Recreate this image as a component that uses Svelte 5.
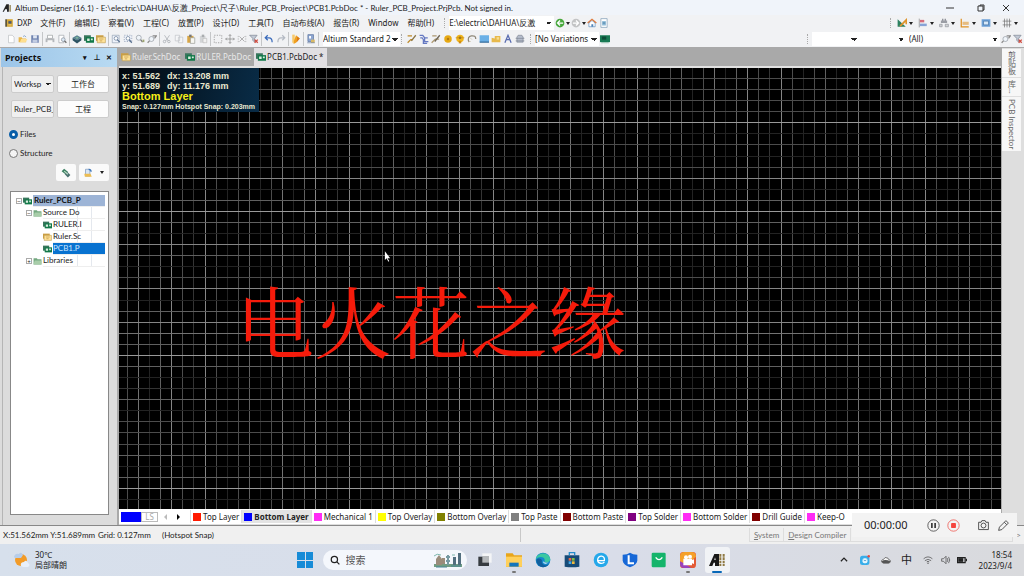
<script lang="ts">
    interface Layer {
        name: string;
        color: string;
    }

    const menus = ['文件(F)', '编辑(E)', '察看(V)', '工程(C)', '放置(P)', '设计(D)', '工具(T)', '自动布线(A)', '报告(R)', 'Window', '帮助(H)'];

    const toolGroups = [
        ['new', 'open', 'save'],
        ['print', 'preview'],
        ['stack', 'pcb', 'sheet'],
        ['zoomDoc', 'zoomArea', 'zoomSel', 'zoomClear'],
        ['cut', 'copy', 'paste', 'stamp'],
        ['select', 'move', 'deselect', 'filter'],
        ['undo', 'redo'],
        ['pencil'],
        ['browse']
    ];
    const placeTools = ['route', 'diff', 'multi', 'pad', 'via', 'arc', 'fill', 'polygon', 'string', 'component'];
    const utilityTools = ['measure', 'align', 'find', 'dimension', 'room', 'grid'];

    const layers: Layer[] = [
        {name: 'Top Layer', color: '#ff1a00'},
        {name: 'Bottom Layer', color: '#0000ff'},
        {name: 'Mechanical 1', color: '#ff2bf5'},
        {name: 'Top Overlay', color: '#ffff00'},
        {name: 'Bottom Overlay', color: '#808000'},
        {name: 'Top Paste', color: '#808080'},
        {name: 'Bottom Paste', color: '#800000'},
        {name: 'Top Solder', color: '#800080'},
        {name: 'Bottom Solder', color: '#ff2bf5'},
        {name: 'Drill Guide', color: '#800000'},
        {name: 'Keep-O', color: '#ff2bf5'}
    ];
    const taskApps = ['tasks', 'folder', 'edge', 'store', 'eapp', 'lenovo', 'mall', 'recorder', 'altium'];
    const trayIcons = ['chevron', 'chat', 'cloud', 'ime', 'wifi', 'sound', 'battery'];

    // grid lines do not all get the same brightness at this zoom level
    const columnTones = [4, 6, 2, 5, 7, 4, 3, 7, 4, 2, 4, 5, 2];
    const rowTones = [4, 4, 4, 4, 8, 2, 4, 2, 4, 7, 2, 5, 8, 5, 2, 7, 5, 2, 4, 7, 2, 5, 7, 6, 5, 8, 5, 2, 3, 5, 2, 4, 4, 4, 5, 2, 5, 8, 2];
    const pitch = 144 / 13;
    const columns = Array.from({length: 180}, (_, i) => ({at: Math.round(8 + i * pitch), tone: columnTones[i % 13]}));
    const rows = Array.from({length: 100}, (_, i) => ({at: Math.round(10 + i * pitch), tone: rowTones[i % rowTones.length]}));

    let view = $state('files');
    let activeLayer = $state('Bottom Layer');
    let query = $state('');

    const icons: Record<string, string> = {
        new: '<path d="M4 2h6l3 3v9H4z" fill="#fff" stroke="#b5b8bd"/>',
        open: '<path d="M1 13V5h5l1 2h6v6z" fill="#e8b64c"/><path d="M3 13l2-5h10l-3 5z" fill="#ffdf8e"/><path d="M8 4q3-3 5 1" stroke="#5b84b8" fill="none"/>',
        save: '<path d="M2 2h12v12H2z" fill="#6f83b0"/><path d="M5 2h6v5H5z" fill="#dfe6f2"/><path d="M4 9h8v5H4z" fill="#c3cde2"/>',
        print: '<path d="M4 2h8v5H4z" fill="#fff" stroke="#8f9396"/><path d="M1 7h14v6H1z" fill="#b4b7bb"/><path d="M4 10h8v4H4z" fill="#f8f8f8"/>',
        preview: '<path d="M3 2h8v12H3z" fill="#fff" stroke="#979ca3"/><circle cx="10" cy="9" r="3" fill="#dce8f4" stroke="#7b8490"/><path d="M12 11l3 3" stroke="#666" stroke-width="2"/>',
        stack: '<path d="M1 6l7-4 7 4-7 4z" fill="#558091"/><path d="M1 6l7 4 7-4v4l-7 5-7-5z" fill="#2c5363"/><path d="M5 6l3-2 3 2-3 2z" fill="#81b39c"/>',
        pcb: '<path d="M0 2h11v9H0z" fill="#39765d"/><path d="M3 5h13v9H3z" fill="#117848"/><path d="M5 7h4v4H5zM11 7h3v3h-3z" fill="#d9eddf"/>',
        sheet: '<path d="M0 2h12v9H0z" fill="#cc9f44"/><path d="M2 5h13v9H2z" fill="#ffe399" stroke="#bd9b50"/><path d="M5 8h7M6 11h4" stroke="#b68635"/>',
        zoomDoc: '<path d="M2 2h11v12H2z" fill="#eef2fa" stroke="#8c9aae"/><circle cx="8" cy="7" r="3" fill="#fff" stroke="#566e8d"/><path d="M10 9l4 4" stroke="#566e8d" stroke-width="2"/>',
        zoomArea: '<path d="M2 2h12v10H2z" fill="#eef2fa" stroke="#7889a3" stroke-dasharray="2"/><circle cx="8" cy="7" r="3" fill="#fff" stroke="#566e8d"/><path d="M10 9l4 5" stroke="#566e8d" stroke-width="2"/>',
        zoomSel: '<circle cx="6" cy="6" r="4" fill="#eff4f9" stroke="#888f99"/><path d="M9 9l3 4" stroke="#777" stroke-width="2"/><path d="M12 9h3v4h-3z" fill="#9ea672"/>',
        zoomClear: '<circle cx="7" cy="8" r="4" fill="#eff4f9" stroke="#888f99"/><path d="M4 11l-3 3M9 3h6l-3 4" stroke="#888" fill="none" stroke-width="2"/>',
        cut: '<path d="M4 2l6 9M12 2L6 11" stroke="#999da3" fill="none"/><circle cx="4" cy="12" r="2" fill="none" stroke="#999da3"/><circle cx="11" cy="12" r="2" fill="none" stroke="#999da3"/>',
        copy: '<path d="M2 2h7v9H2zM7 5h7v9H7z" fill="#f5f6f7" stroke="#babdc2"/>',
        paste: '<path d="M2 3h10v11H2z" fill="#d7a647"/><path d="M5 1h4v4H5z" fill="#777"/><path d="M7 6h7v9H7z" fill="#f7f7f2" stroke="#8f928b"/>',
        stamp: '<path d="M3 3h9v11H3z" fill="#d3d5d7"/><path d="M6 1h4v4H6z" fill="#a9acaf"/><path d="M8 7h6v7H8z" fill="#f1f1f1" stroke="#b8b8b8"/>',
        select: '<path d="M2 2h12v12H2z" fill="none" stroke="#777" stroke-dasharray="2"/>',
        move: '<path d="M8 1v14M1 8h14M6 3l2-2 2 2M6 13l2 2 2-2M3 6L1 8l2 2M13 6l2 2-2 2" fill="none" stroke="#777"/>',
        deselect: '<path d="M4 4l8 8M12 4l-8 8" stroke="#888"/><path d="M2 3v10M14 3v10" stroke="#999" stroke-dasharray="2"/>',
        filter: '<path d="M1 2h12l-4 5v6l-3-3V7z" fill="#c3cad6" stroke="#737c8b"/><path d="M9 9l5 5M14 9l-5 5" stroke="#cf4b3e" stroke-width="2"/>',
        undo: '<path d="M6 2L2 6l4 4M2 6h6q5 0 5 7" fill="none" stroke="#3a6bbb" stroke-width="2"/>',
        redo: '<path d="M10 2l4 4-4 4M14 6H8q-5 0-5 7" fill="none" stroke="#b5bbc4" stroke-width="2"/>',
        pencil: '<path d="M2 1h4v13H2z" fill="#f7c96a"/><path d="M8 2l6 5-6 7-4 2 1-6z" fill="#f0a01f"/><path d="M10 4l4 3-5 6z" fill="#d9781a"/>',
        browse: '<path d="M3 1h9v11H3z" fill="#8ea6d1" stroke="#526b99"/><path d="M5 3h3v4H5z" fill="#fff"/><path d="M8 9h6v5H8z" fill="#d7b866"/><path d="M2 14h12" stroke="#526b99"/>',
        route: '<path d="M1 3h7M1 14l5-5h3" stroke="#be8a2a" fill="none" stroke-width="2"/><path d="M14 2L7 11" stroke="#8b7440" stroke-width="2"/>',
        diff: '<path d="M1 2h5l3 4v6h6M2 6h3l2 3v6h6M9 6h5" stroke="#6478c1" fill="none" stroke-width="2"/>',
        multi: '<path d="M2 3h7M1 14l6-6h6" stroke="#ad9870" fill="none" stroke-width="2"/><path d="M14 2L6 12" stroke="#6e6453" stroke-width="2"/>',
        pad: '<circle cx="8" cy="8" r="6" fill="#e6a914"/><circle cx="8" cy="8" r="2" fill="#b57910"/>',
        via: '<circle cx="8" cy="7" r="6" fill="#efb41c"/><circle cx="8" cy="6" r="2" fill="#8e6c20"/><path d="M6 11h4v4H6z" fill="#d28e12"/><path d="M1 6h14" stroke="#bc8416"/>',
        arc: '<path d="M3 13Q0 4 7 3t7 5" stroke="#8e8778" fill="none" stroke-width="2"/><path d="M2 12h4M5 6l3 3" stroke="#c2b799"/>',
        fill: '<path d="M1 2h15v11H1z" fill="#69afe6"/><path d="M1 12h15v2H1z" fill="#376d9d"/>',
        polygon: '<path d="M1 6l5 1V3h9v10H1z" fill="#e7b94c"/><path d="M9 5h4v4H9z" fill="#f7dd90"/>',
        string: '<path d="M3 14L8 2l5 12M5 9h6" fill="none" stroke="#596cb0" stroke-width="2"/>',
        component: '<path d="M3 5l2-3h6l2 3v8H3z" fill="#b5bccb" stroke="#7a818e"/><path d="M1 7h14M1 11h14" stroke="#7a818e"/>',
        board: '<path d="M0 2h16v11H0z" fill="#197a54"/><path d="M3 4h7v5H3z" fill="#0d4d38"/><path d="M2 14h12" stroke="#69a88d"/>',
        dxp: '<path d="M2 2h3v12H2z" fill="#5e563a"/><path d="M5 2h9v12H5z" fill="#d3a32c"/><path d="M7 5h5v4H7z" fill="#465676"/><path d="M7 11h5" stroke="#fff2bd"/>',
        altiumSmall: '<path d="M1 14L7 2h4v12H8v-4H5l-2 4z" fill="#232323"/><path d="M13 3v11" stroke="#8a7842" stroke-width="2"/>',
        back: '<circle cx="8" cy="8" r="7" fill="#48a83d"/><path d="M13 8H4M8 4L4 8l4 4" stroke="#fff" fill="none" stroke-width="2"/>',
        forward: '<circle cx="8" cy="8" r="7" fill="#c3c4c5"/><path d="M3 8h9M8 4l4 4-4 4" stroke="#fff" fill="none" stroke-width="2"/>',
        home: '<path d="M3 8v6h10V8L8 4z" fill="#fff" stroke="#4d82b7"/><path d="M1 8l7-6 7 6" fill="none" stroke="#df783b" stroke-width="2"/><path d="M7 10h3v4H7z" fill="#4d82b7"/>',
        favorite: '<path d="M3 1h10v14H3z" fill="#fff" stroke="#6e91ad"/><path d="M5 5h6v7H5z" fill="#8bb8d5"/><path d="M6 8h4" stroke="#235f8b"/>',
        measure: '<path d="M1 2v12h13z" fill="#2c8161"/><path d="M5 13L15 3v7" fill="none" stroke="#de942c" stroke-width="3"/>',
        align: '<path d="M2 1v14" stroke="#777"/><path d="M3 3h7v4H3z" fill="#d56c7b"/><path d="M3 9h11v4H3z" fill="#87a3d6"/>',
        find: '<path d="M5 1h2v6H5zM9 1h2v6H9z" fill="#848790"/><path d="M3 4h10v4H3z" fill="#9a9da4"/><path d="M1 10h4v4H1zM10 10h5v4h-5z" fill="#d1d3d6" stroke="#8c8f96"/>',
        dimension: '<path d="M2 1v13h12" fill="none" stroke="#df9125" stroke-width="2"/><path d="M4 6h10v5H4z" fill="#e6bc81"/>',
        room: '<path d="M1 2h14v12H1z" fill="#6ca1d8"/><path d="M4 5h8v6H4z" fill="#d7e8f8" stroke="#3c6c9d"/>',
        grid: '<path d="M4 1v14M8 1v14M12 1v14M1 5h14M1 11h14" stroke="#666"/>',
        workspace: '<path d="M1 5l4-4 6 5-4 4z" fill="#3c8062"/><path d="M6 10l4-4 5 5-4 4z" fill="#4a716f"/><path d="M5 5l6 5" stroke="#bad9c4" stroke-width="2"/>',
        addDoc: '<path d="M4 2h7v11H4z" fill="#d9e6f5" stroke="#6e8db6"/><path d="M2 9h10l2 5H3z" fill="#edbd52"/><path d="M9 2q4 0 4 4" stroke="#3973b8" fill="none" stroke-width="2"/>',
        treeFolder: '<path d="M1 3h6l1 2h7v9H1z" fill="#74a880"/><path d="M3 7h12v7H1z" fill="#a8cda9"/>',
        tasks: '<path d="M8 2h14v14H8z" fill="#f4f5f7"/><path d="M2 7h16v14H2z" fill="#363b40"/><path d="M8 7h10v9H8z" fill="#b5b8bb"/>',
        folder: '<path d="M0 2h10l2 3h12v17H0z" fill="#e8a51b"/><path d="M0 7h24v15H0z" fill="#ffd05b"/><path d="M5 16h14v6H5z" fill="#1475bc"/>',
        edge: '<circle cx="12" cy="12" r="11" fill="#1388cc"/><path d="M1 11C3 0 21-1 23 11c0 5-8 6-9 3 3-5-6-10-13-3" fill="#3bc7a1"/><path d="M2 12c5-5 10 0 8 3 1 5 7 6 11 3-7 9-19 4-19-6" fill="#12609d"/><path d="M12 14q4 4 9 1-4 4-8 2z" fill="#e9f8fb"/>',
        store: '<path d="M1 5h22v17q-11 2-22 0z" fill="#174b78"/><path d="M8 5V1h8v4" fill="none" stroke="#248dcc" stroke-width="2"/><path d="M7 9h4v4H7z" fill="#ed6846"/><path d="M12 9h4v4h-4z" fill="#83bd48"/><path d="M7 14h4v4H7z" fill="#43a9e6"/><path d="M12 14h4v4h-4z" fill="#f2bb3c"/>',
        eapp: '<circle cx="12" cy="12" r="11" fill="#25a8ea"/><path d="M6 13h11c2-9-10-9-10-1 0 6 8 6 10 3" fill="none" stroke="#fff" stroke-width="2"/>',
        lenovo: '<path d="M1 4q7 0 11-3 4 3 11 3v9q-1 6-11 10Q2 19 1 13z" fill="#1768d7"/><path d="M10 5v12h8" fill="none" stroke="#fff" stroke-width="3"/>',
        mall: '<rect x="1" y="1" width="21" height="22" rx="2" fill="#15b46b"/><path d="M7 8q5 7 10 0" fill="none" stroke="#fff" stroke-width="2"/>',
        recorder: '<rect x="0" y="0" width="24" height="24" rx="5" fill="#e35a35"/><path d="M0 7q0-7 7-7h10q7 0 7 7L5 23q-5-1-5-6z" fill="#f5a12a"/><path d="M0 14v4q0 6 7 6h10l-9-6z" fill="#9a42bd"/><circle cx="9" cy="8" r="3" fill="#fff"/><circle cx="15" cy="7" r="3" fill="#fff"/><path d="M5 10h13v2l3-1v7l-3-1v3H5z" fill="#fff"/>',
        altium: '<path d="M0 21L8 3h7v18h-6v-5H7l-2 5z" fill="#171717"/><path d="M9 8l-1 4h2z" fill="#fff"/><path d="M17 3v18M22 3v18" stroke="#8f7942" stroke-width="3" stroke-dasharray="4 1"/>',
        chevron: '<path d="M3 10l5-5 5 5" fill="none" stroke="#222" stroke-width="2"/>',
        chat: '<rect x="0" y="1" width="15" height="15" rx="4" fill="#38aeea"/><rect x="4" y="5" width="8" height="8" rx="3" fill="#e6f6fd"/><path d="M6 8q2 3 4 0" fill="none" stroke="#1876b7"/><circle cx="14" cy="2" r="2" fill="#e54b42"/>',
        cloud: '<path d="M4 13q-4-1-3-4 1-2 3-2 2-5 7-2l1 2q4 1 3 4-1 2-3 2z" fill="#f5f5f5" stroke="#333"/><path d="M1 10q5-4 14 0-1 3-3 3H4q-3-1-3-3z" fill="#555"/>',
        wifi: '<path d="M1 6q7-6 14 0M3 9q5-4 10 0M6 11q2-2 4 0" fill="none" stroke="#333"/><circle cx="8" cy="13" r="1" fill="#333"/>',
        sound: '<path d="M1 6h3l4-4v12l-4-4H1z" fill="none" stroke="#333"/><path d="M10 5q2 3 0 6M12 3q4 5 0 10" fill="none" stroke="#333"/>',
        battery: '<path d="M1 4h12v8H1z" fill="none" stroke="#222" stroke-width="2"/><path d="M2 5h8v6H2z" fill="#222"/><path d="M14 6h2v4h-2z" fill="#222"/>',
        pause: '<circle cx="8" cy="8" r="7" fill="none" stroke="#444"/><path d="M6 5v6M10 5v6" stroke="#333" stroke-width="2"/>',
        stop: '<circle cx="8" cy="8" r="7" fill="none" stroke="#ee5c55"/><rect x="5" y="5" width="6" height="6" rx="1" fill="#f5443d"/>',
        camera: '<path d="M2 4h3l1-2h4l1 2h3v9H2z" fill="none" stroke="#333"/><circle cx="8" cy="8" r="3" fill="none" stroke="#333"/>',
        pen: '<path d="M2 14l1-4 8-8 3 3-8 8zM9 4l3 3" fill="none" stroke="#333"/>',
        magnifier: '<circle cx="7" cy="7" r="5" fill="none" stroke="#222" stroke-width="2"/><path d="M11 11l4 4" stroke="#222" stroke-width="2"/>'
    };
</script>

{#snippet icon(name: string, box = 16)}
    <svg class="icon" viewBox="0 0 {box} {box}" aria-hidden="true">{@html icons[name]}</svg>
{/snippet}

<div class="desktop">
    <header class="titlebar">
        {@render icon('altiumSmall')}
        <span class="title">Altium Designer (16.1) - E:\electric\DAHUA\反激_Project\尺子\Ruler_PCB_Project\PCB1.PcbDoc * - Ruler_PCB_Project.PrjPcb. Not signed in.</span>
        <button aria-label="Minimize"><svg viewBox="0 0 8 8"><path d="M0 4h8" /></svg></button>
        <button aria-label="Restore"><svg viewBox="0 0 8 8"><path d="M1 2h5v5H1zM3 2V1h4v5H6" /></svg></button>
        <button aria-label="Close"><svg viewBox="0 0 8 8"><path d="M1 1l6 6M7 1L1 7" /></svg></button>
    </header>

    <nav class="menubar">
        <button class="dxp">{@render icon('dxp')}DXP</button>
        {#each menus as menu}
            <button>{menu}</button>
        {/each}
        <span class="grip"></span>
        <select class="path" aria-label="Path"><option>E:\electric\DAHUA\反激</option></select>
        <button class="tool" aria-label="Back">{@render icon('back')}</button>
        <i class="drop"></i>
        <button class="tool" aria-label="Forward">{@render icon('forward')}</button>
        <i class="drop"></i>
        <button class="tool" aria-label="Home">{@render icon('home')}</button>
        <button class="tool" aria-label="Favorites">{@render icon('favorite')}</button>
        <div class="utility">
            <span class="grip"></span>
            {#each utilityTools as tool}
                <button class="tool dropdown" aria-label={tool}>{@render icon(tool)}<i class="drop"></i></button>
            {/each}
        </div>
    </nav>

    <div class="toolbar">
        {#each toolGroups as group}
            <div class="group">
                {#each group as tool}
                    <button class="tool" aria-label={tool}>{@render icon(tool)}</button>
                {/each}
            </div>
        {/each}
        <select class="standard" aria-label="View configuration"><option>Altium Standard 2</option></select>
        <span class="grip"></span>
        {#each placeTools as tool}
            <button class="tool" aria-label={tool}>{@render icon(tool)}</button>
        {/each}
        <span class="grip variant-grip"></span>
        <select class="variations" aria-label="Variations"><option>[No Variations</option></select>
        <button class="tool" aria-label="board">{@render icon('board')}</button>
        <div class="filterbar">
            <span class="grip"></span>
            <select class="net" aria-label="Net"><option></option></select>
            <select class="net" aria-label="Component"><option></option></select>
            <select class="all" aria-label="Filter"><option>(All)</option></select>
            <button class="tool" aria-label="Zoom filter">{@render icon('zoomClear')}</button>
            <button class="tool" aria-label="Clear filter">{@render icon('filter')}</button>
        </div>
    </div>

    <main>
        <aside class="projects">
            <h2>Projects<span>▾</span><span>⊥</span><span>✕</span></h2>
            <div class="panel">
                <div class="fields">
                    <select aria-label="Workspace"><option>Worksp</option></select>
                    <button>工作台</button>
                    <input value="Ruler_PCB_I" aria-label="Project" />
                    <button>工程</button>
                </div>
                <label><input type="radio" bind:group={view} value="files" />Files</label>
                <label><input type="radio" bind:group={view} value="structure" />Structure</label>
                <div class="actions">
                    <button aria-label="Workspace view">{@render icon('workspace')}</button>
                    <button class="wide" aria-label="Add document">{@render icon('addDoc')}<i class="drop"></i></button>
                </div>
                <ul class="tree">
                    <li class="root"><i class="twist">−</i>{@render icon('pcb')}<span>Ruler_PCB_P</span></li>
                    <li class="branch"><i class="twist">−</i>{@render icon('treeFolder')}<span>Source Do</span></li>
                    <li class="leaf">{@render icon('pcb')}<span>RULER.I</span></li>
                    <li class="leaf">{@render icon('sheet')}<span>Ruler.Sc</span></li>
                    <li class="leaf current">{@render icon('pcb')}<span>PCB1.P</span></li>
                    <li class="branch"><i class="twist">+</i>{@render icon('treeFolder')}<span>Libraries</span></li>
                </ul>
            </div>
        </aside>

        <section class="editor">
            <div class="doctabs">
                <button>{@render icon('sheet')}Ruler.SchDoc</button>
                <button>{@render icon('pcb')}RULER.PcbDoc</button>
                <button class="active">{@render icon('pcb')}PCB1.PcbDoc *</button>
            </div>
            <div class="board">
                <svg class="gridlines">
                    {#each columns as line}
                        <rect class="tone{line.tone}" x={line.at} y="0" width="1" height="100%" />
                    {/each}
                    {#each rows as line}
                        <rect class="tone{line.tone}" x="0" y={line.at} width="100%" height="1" />
                    {/each}
                </svg>
                <div class="headsup">
                    <div class="coords"><span>x: 51.562</span><span>dx: 13.208 mm</span></div>
                    <div class="coords"><span>y: 51.689</span><span>dy: 11.176 mm</span></div>
                    <strong>Bottom Layer</strong>
                    <small>Snap: 0.127mm Hotspot Snap: 0.203mm</small>
                </div>
                <div class="silk">电火花之缘</div>
                <svg class="pointer" viewBox="0 0 8 12"><path d="M1 0v10l2-2 2 4 1-1-2-3h3z" fill="#fff" /></svg>
            </div>
            <div class="layerbar">
                <span class="layer-color"></span>
                <button class="ls">LS</button>
                <button class="arrow off" aria-label="Previous layers"><svg viewBox="0 0 4 6"><path d="M4 0v6L1 3z" /></svg></button>
                <button class="arrow" aria-label="Next layers"><svg viewBox="0 0 4 6"><path d="M0 0v6l3-3z" /></svg></button>
                {#each layers as layer}
                    <button class="layer" class:active={layer.name === activeLayer} onclick={() => activeLayer = layer.name}>
                        <i style="background: {layer.color}"></i>{layer.name}
                    </button>
                {/each}
            </div>
        </section>

        <aside class="sidetabs">
            <div>
                <button>剪贴板</button>
                <button>库...</button>
                <button>PCB Inspector</button>
            </div>
        </aside>
    </main>

    <footer class="statusbar">
        <span class="position">X:51.562mm Y:51.689mm</span>
        <span class="snap">Grid: 0.127mm</span>
        <span class="hotspot">(Hotspot Snap)</span>
        <div class="panels">
            <button><u>S</u>ystem</button>
            <button><u>D</u>esign Compiler</button>
            <span></span>
            <button class="more">&gt;</button>
        </div>
    </footer>

    <div class="recorder">
        <time>00:00:00</time>
        <button aria-label="Pause">{@render icon('pause')}</button>
        <button aria-label="Stop">{@render icon('stop')}</button>
        <button class="camera" aria-label="Screenshot">{@render icon('camera')}</button>
        <button aria-label="Draw">{@render icon('pen')}</button>
    </div>

    <div class="taskbar">
        <button class="weather">
            <svg viewBox="0 0 16 16"><circle cx="7" cy="8" r="6" fill="#f29b28" /><path d="M0 5q1-4 5-3 2-3 4 1l-2 3H1z" fill="#b7cde9" /><path d="M7 14q-1-4 3-4 2-3 4 1 3 2 0 4H9z" fill="#e8f0fb" /></svg>
            <span>30℃<br />局部晴朗</span>
        </button>
        <div class="apps">
            <button class="start" aria-label="Start"><svg viewBox="0 0 16 16"><path d="M0 0h8v8H0zM9 0h7v8H9zM0 9h8v7H0zM9 9h7v7H9z" fill="#168bd7" /></svg></button>
            <label class="search">
                {@render icon('magnifier')}
                <input placeholder="搜索" bind:value={query} aria-label="搜索" />
                <svg class="skyline" viewBox="0 0 30 16"><path d="M1 12h28v3H1z" fill="#729d82" /><path d="M3 13V7l3-4 3 4v6zM9 12V6h3v6z" fill="#9a8c7b" /><path d="M15 13V3M13 5h4M13 9h4" stroke="#769aa3" stroke-width="2" /><path d="M20 13V5h3v8zM25 13V1h3v12z" fill="#526f7f" /><path d="M1 4q3-3 7-1M19 3h3" stroke="#7eb8ae" fill="none" /><path d="M3 15h11M18 14h10" stroke="#458496" /></svg>
            </label>
            {#each taskApps as app}
                <button class="app" class:current={app === 'altium'} class:running={app === 'folder' || app === 'recorder'} aria-label={app}>{@render icon(app, 24)}</button>
            {/each}
        </div>
        <div class="tray">
            {#each trayIcons as item}
                <button class={item} aria-label={item}>
                    {#if item === 'ime'}中{:else}{@render icon(item)}{/if}
                </button>
            {/each}
            <div class="clock">18:54<br />2023/9/4</div>
        </div>
    </div>
</div>

<style>
    :global(body) {
        margin: 0;
        overflow: hidden;
    }

    .desktop {
        position: relative;
        display: flex;
        flex-direction: column;
        height: 100vh;
        background: #f1f2f4;
        color: #222;
        font: 8px/12px "Noto Sans", "Noto Sans CJK SC", sans-serif;
        white-space: nowrap;
    }

    .titlebar, .panel, .statusbar, .sidetabs {
        font-family: Lato, "Noto Sans CJK SC", sans-serif;
    }

    button, select, input {
        margin: 0;
        padding: 0;
        border: 0;
        background: none;
        color: inherit;
        font: inherit;
        box-sizing: border-box;
        min-width: 0;
    }

    button {
        display: flex;
        align-items: center;
        justify-content: center;
        flex: none;
    }

    select {
        appearance: none;
        background:
            linear-gradient(45deg, transparent 50%, #222 50%) no-repeat right 5px center / 3px 3px,
            linear-gradient(-45deg, transparent 50%, #222 50%) no-repeat right 2px center / 3px 3px,
            #fff;
        padding-right: 9px;
        height: 14px;
        overflow: hidden;
    }

    svg {
        display: block;
        flex: none;
    }

    .icon {
        width: 10px;
        height: 10px;
    }

    .titlebar {
        display: flex;
        align-items: center;
        height: 15px;
        padding: 0 8px 0 2px;
        background: #f0f4fa;
    }

    .title {
        flex: 1;
        margin-left: 3px;
    }

    .titlebar button {
        width: 31px;
    }

    .titlebar button:last-child {
        width: 20px;
    }

    .titlebar button svg {
        width: 8px;
        height: 8px;
        fill: none;
        stroke: #333;
    }

    .menubar, .toolbar {
        display: flex;
        align-items: center;
        height: 16px;
        padding-left: 4px;
    }

    .menubar > button {
        margin-right: 9px;
    }

    .menubar .dxp {
        gap: 3px;
        margin-right: 8px;
    }

    .tool, .menubar > .tool {
        width: 12px;
        height: 14px;
        margin: 0;
    }

    .grip {
        width: 1px;
        height: 10px;
        margin: 0 3px 0 1px;
        border-left: 1px dotted #aaa;
    }

    .drop {
        flex: none;
        width: 0;
        margin: 0 1px;
        border: 2px solid transparent;
        border-top: 3px solid #222;
        border-bottom: 0;
    }

    .menubar > .drop {
        margin: 0;
    }

    .path {
        width: 105px;
    }

    .utility, .filterbar {
        display: flex;
        align-items: center;
        margin-left: auto;
    }

    .utility {
        padding-right: 3px;
    }

    .tool.dropdown {
        width: 21px;
        gap: 1px;
    }

    .toolbar {
        padding-left: 5px;
    }

    .group {
        display: flex;
        padding-right: 1px;
        margin-right: 1px;
        border-right: 1px solid #c4c6c8;
    }

    .standard {
        width: 77px;
        margin-left: 3px;
    }

    .variations {
        width: 64px;
    }

    .variant-grip {
        margin-left: 4px;
    }

    .net {
        width: 47px;
    }

    .all {
        width: 94px;
        padding-left: 3px;
    }

    main {
        display: flex;
        flex: 1;
        min-height: 0;
        padding-top: 1px;
        background: #a9a9a9;
        border-bottom: 1px solid #888;
    }

    .projects {
        display: flex;
        flex-direction: column;
        width: 117px;
        margin-right: 2px;
        background: #dcdcdc;
    }

    h2 {
        display: flex;
        align-items: center;
        height: 19px;
        margin: 0 0 0 1px;
        padding: 0 2px 0 4px;
        background: linear-gradient(90deg, #9cc5e8, #b8daf2);
        color: #111;
        font-size: 9px;
    }

    h2 span {
        width: 12px;
        font-size: 7px;
        text-align: center;
    }

    h2 span:first-child {
        margin-left: auto;
    }

    .panel {
        display: flex;
        flex: 1;
        flex-direction: column;
        margin-left: 2px;
        padding: 8px 8px 10px;
        border-left: 1px solid #b5b5b5;
    }

    .fields {
        display: grid;
        grid-template-columns: 43px 1fr;
        gap: 7px 3px;
        margin-bottom: 10px;
    }

    .fields > * {
        height: 18px;
        border: 1px solid #ccc;
        border-radius: 2px;
        background-color: #fcfcfc;
    }

    .fields select, .fields input {
        width: 100%;
        padding-left: 2px;
        background-color: #f0f0f0;
    }

    .panel label {
        display: flex;
        align-items: center;
        gap: 2px;
        height: 12px;
        margin-bottom: 7px;
    }

    .panel input[type="radio"] {
        appearance: none;
        width: 9px;
        height: 9px;
        margin-left: -2px;
        border: 1px solid #777;
        border-radius: 50%;
        background: #f4f4f4;
    }

    .panel input[type="radio"]:checked {
        border: 3px solid #075da8;
        background: #fff;
    }

    .actions {
        display: flex;
        justify-content: flex-end;
        gap: 3px;
        margin-top: -2px;
    }

    .actions button {
        width: 20px;
        height: 17px;
        border-radius: 2px;
        background: #fafafa;
    }

    .actions .wide {
        width: 30px;
        gap: 6px;
    }

    .tree {
        flex: 1;
        margin: 10px 0 0 -1px;
        padding: 3px 3px 0 5px;
        overflow: hidden;
        border: 1px solid #888;
        background: #fff;
        list-style: none;
    }

    .tree li {
        display: flex;
        align-items: center;
        height: 12px;
    }

    .tree .icon {
        width: 9px;
        margin-right: 1px;
    }

    /* the two faint rules are the empty status columns of the tree */
    .tree span {
        flex: 1;
        height: 11px;
        line-height: 11px;
        background:
            linear-gradient(#e4e8ee, #e4e8ee) no-repeat right 27px top / 1px 100%,
            linear-gradient(#e4e8ee, #e4e8ee) no-repeat right 13px top / 1px 100%;
        border-bottom: 1px solid #eee;
    }

    .tree .root span {
        padding-left: 1px;
        background: #9db4d6;
        color: #111;
        font-weight: bold;
    }

    .branch {
        padding-left: 10px;
    }

    .leaf {
        padding-left: 27px;
    }

    .tree .current span {
        background: #0872d0;
        color: #cde6ff;
    }

    .twist {
        display: flex;
        align-items: center;
        justify-content: center;
        width: 4px;
        height: 4px;
        margin-right: 1px;
        border: 1px solid #aaa;
        font: 6px/4px "Liberation Sans", sans-serif;
    }

    .editor {
        display: flex;
        flex: 1;
        flex-direction: column;
        min-width: 0;
    }

    .doctabs {
        display: flex;
        height: 18px;
        border-bottom: 2px solid #e1e1e1;
    }

    .doctabs button {
        gap: 1px;
        padding: 0 3px 0 2px;
        color: #e8e8e8;
    }

    .doctabs .active {
        background: #e1dfe2;
        color: #222;
    }

    .board {
        position: relative;
        flex: 1;
        overflow: hidden;
        background: #000;
    }

    .gridlines {
        position: absolute;
        width: 100%;
        height: 100%;
    }

    .tone2 { fill: #232323; }
    .tone3 { fill: #343434; }
    .tone4 { fill: #4c4c4c; }
    .tone5 { fill: #606060; }
    .tone6 { fill: #737373; }
    .tone7 { fill: #858585; }
    .tone8 { fill: #999; }

    .headsup {
        position: absolute;
        top: 0;
        left: 0;
        width: 137px;
        padding: 3px 0 1px 3px;
        background: linear-gradient(100deg, #02080e, #092c47);
        color: #e9e8cf;
        font: bold 9px/10px "Liberation Sans", sans-serif;
    }

    .coords {
        display: flex;
    }

    .coords span:first-child {
        width: 45px;
    }

    .headsup strong {
        display: block;
        color: #f7ee18;
        font-size: 11px;
        line-height: 11px;
    }

    .headsup small {
        display: block;
        font-size: 7px;
        line-height: 9px;
    }

    .silk {
        position: absolute;
        top: 205px;
        left: 117px;
        color: #f51b0b;
        font: 400 78px/92px "Noto Serif CJK SC", "Noto Sans CJK SC", serif;
    }

    .pointer {
        position: absolute;
        top: 183px;
        left: 265px;
        width: 7px;
        height: 11px;
    }

    .layerbar {
        display: flex;
        align-items: center;
        height: 15px;
        padding-left: 2px;
        overflow: hidden;
        background: #fff;
        border-bottom: 1px solid #ddd;
    }

    .layer-color {
        flex: none;
        width: 20px;
        height: 10px;
        background: #0000ff;
    }

    .ls {
        width: 17px;
        height: 10px;
        border: 1px solid #bbb;
        color: #aaa;
    }

    .arrow {
        width: 14px;
    }

    .arrow svg {
        width: 4px;
        height: 6px;
    }

    .arrow.off {
        fill: #bbb;
    }

    .layer {
        gap: 2px;
        height: 13px;
        padding: 0 2px;
        border-left: 1px solid #ddd;
    }

    .arrow + .layer {
        margin-left: 4px;
    }

    .layer i {
        width: 8px;
        height: 8px;
    }

    .layer.active {
        background: #e3e3e3;
        font-weight: bold;
    }

    .sidetabs {
        width: 22px;
        margin-left: 1px;
        background: #dedede;
    }

    .sidetabs div {
        display: flex;
        flex-direction: column;
        align-items: flex-start;
        gap: 1px;
        padding-top: 1px;
    }

    .sidetabs button {
        width: 19px;
        padding: 2px 0;
        background: #f7f7f7;
        color: #666;
        writing-mode: vertical-rl;
    }

    .statusbar {
        display: flex;
        align-items: center;
        height: 18px;
        padding: 0 3px;
        background: #f0f0f0;
    }

    .position {
        width: 95px;
    }

    .snap {
        width: 64px;
    }

    .hotspot {
        width: 358px;
        border-right: 1px solid #c8c8c8;
        line-height: 14px;
    }

    .panels {
        display: flex;
        margin-left: auto;
        color: #777;
    }

    .panels > * {
        display: block;
        height: 14px;
        padding: 0 4px;
        border: 1px solid #ddd;
        border-width: 0 0 1px 1px;
    }

    .panels span {
        width: 153px;
        height: 13px;
    }

    .panels .more {
        padding: 0 0 0 3px;
        border-bottom: 0;
    }

    .recorder {
        position: absolute;
        right: 7px;
        bottom: 39px;
        display: flex;
        align-items: center;
        width: 165px;
        height: 24px;
        box-sizing: border-box;
        padding-left: 12px;
        gap: 7px;
        background: #f3f3f3;
        font-size: 11px;
    }

    .recorder time {
        width: 56px;
    }

    .recorder .icon {
        width: 13px;
        height: 13px;
    }

    .recorder .camera {
        margin-left: 10px;
    }

    .taskbar {
        display: grid;
        grid-template-columns: 1fr auto 1fr;
        align-items: center;
        height: 32px;
        background: linear-gradient(90deg, #d7e0ec, #d9dde9 60%, #d9dadd);
    }

    .weather {
        justify-self: start;
        gap: 5px;
        padding-left: 14px;
        line-height: 10px;
        text-align: left;
    }

    .weather svg {
        width: 16px;
        height: 16px;
    }

    .apps {
        display: flex;
        align-items: center;
        height: 100%;
        padding-left: 4px;
    }

    .start svg {
        width: 16px;
        height: 16px;
    }

    .search {
        display: flex;
        align-items: center;
        width: 144px;
        height: 20px;
        margin: 0 4px 0 10px;
        padding: 0 4px 0 7px;
        box-sizing: border-box;
        border-radius: 10px;
        background: #f4f7fc;
    }

    .search input {
        flex: 1;
        padding-left: 6px;
        outline: 0;
        font-size: 10px;
    }

    .search input::placeholder {
        color: #555;
    }

    .skyline {
        width: 30px;
        height: 16px;
    }

    .app {
        position: relative;
        width: 25px;
        height: 26px;
        margin: 0 2px;
        border-radius: 3px;
    }

    .app .icon {
        width: 16px;
        height: 16px;
    }

    .app.current {
        background: #f1f3f6;
    }

    .app.current::after, .app.running::after {
        content: "";
        position: absolute;
        bottom: 0;
        width: 4px;
        height: 2px;
        border-radius: 1px;
        background: #777;
    }

    .app.current::after {
        width: 10px;
        background: #0868b8;
    }

    .tray {
        display: flex;
        align-items: center;
        justify-self: end;
        padding-right: 12px;
    }

    .tray button {
        width: 21px;
        font-size: 11px;
    }

    .tray .sound, .tray .battery {
        width: 16px;
    }

    .clock {
        width: 42px;
        line-height: 11px;
        text-align: right;
    }
</style>
